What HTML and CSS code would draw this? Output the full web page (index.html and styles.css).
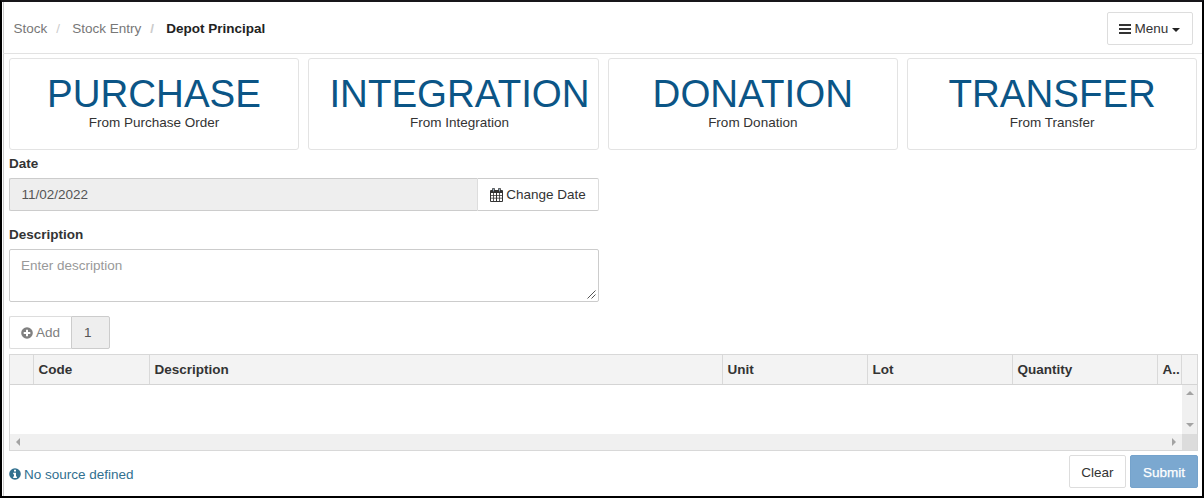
FILE: index.html
```html
<!DOCTYPE html>
<html lang="en">
<head>
<meta charset="utf-8">
<title>Stock Entry</title>
<link rel="stylesheet" href="styles.css">
</head>
<body>
<div class="window">
  <header class="topbar">
    <ol class="breadcrumb">
      <li>Stock</li>
      <li>Stock Entry</li>
      <li class="current">Depot Principal</li>
    </ol>
    <button class="btn menu-btn" type="button">
      <svg class="icon-bars" width="12" height="10" viewBox="0 0 12 10"><path d="M0 0h12v2H0zM0 4h12v2H0zM0 8h12v2H0z" fill="currentColor"/></svg>
      <span>Menu</span>
      <span class="caret"></span>
    </button>
  </header>

  <main class="content">
    <section class="sources">
      <div class="source"><div class="source-body"><div class="source-title">PURCHASE</div><div>From Purchase Order</div></div></div>
      <div class="source"><div class="source-body"><div class="source-title">INTEGRATION</div><div>From Integration</div></div></div>
      <div class="source"><div class="source-body"><div class="source-title">DONATION</div><div>From Donation</div></div></div>
      <div class="source"><div class="source-body"><div class="source-title">TRANSFER</div><div>From Transfer</div></div></div>
    </section>

    <section class="form">
      <div class="label">Date</div>
      <div class="date-group">
        <div class="date-input">11/02/2022</div>
        <button class="btn date-btn" type="button">
          <svg width="13" height="14" viewBox="0 0 13 14"><path d="M1 2h11a1 1 0 0 1 1 1v10a1 1 0 0 1-1 1H1a1 1 0 0 1-1-1V3a1 1 0 0 1 1-1z" fill="#333"/><path d="M1 5h2.2v2H1zM4 5h2v2H4zM7 5h2v2H7zM9.8 5H12v2H9.8zM1 7.8h2.2v2H1zM4 7.8h2v2H4zM7 7.8h2v2H7zM9.8 7.8H12v2H9.8zM1 10.6h2.2V13H1zM4 10.6h2V13H4zM7 10.6h2V13H7zM9.8 10.6H12V13H9.8z" fill="#fff"/><path d="M3.5 1v2M9.5 1v2" stroke="#333" stroke-width="2.6" stroke-linecap="round"/><path d="M3.5 1v2M9.5 1v2" stroke="#9fb8cc" stroke-width=".9" stroke-linecap="round"/></svg>
          <span>Change Date</span>
        </button>
      </div>
      <div class="label label-desc">Description</div>
      <div class="textarea">
        <span>Enter description</span>
        <svg class="resize" width="9" height="9" viewBox="0 0 9 9"><path d="M.5 8.5l8-8M4.5 8.5l4-4" stroke="#555" fill="none"/></svg>
      </div>
    </section>

    <div class="add-group">
      <button class="btn add-btn" type="button">
        <svg width="12" height="12" viewBox="0 0 12 12"><circle cx="6" cy="6" r="5.8" fill="currentColor"/><path d="M6 2.7v6.6M2.7 6h6.6" stroke="#fff" stroke-width="2"/></svg>
        <span>Add</span>
      </button>
      <div class="add-count">1</div>
    </div>

    <div class="grid">
      <div class="grid-head">
        <div></div><div>Code</div><div>Description</div><div>Unit</div><div>Lot</div><div>Quantity</div><div>A..</div><div></div>
      </div>
      <div class="grid-body">
        <div class="rows"></div>
        <div class="vscroll"><i class="arrow up"></i><i class="arrow down"></i></div>
        <div class="hscroll"><i class="arrow left"></i><i class="arrow right"></i></div>
        <div class="corner"></div>
      </div>
    </div>

    <footer class="footer">
      <div class="info">
        <svg width="12" height="12" viewBox="0 0 12 12"><circle cx="6" cy="6" r="5.8" fill="currentColor"/><path d="M5 1.8h2v1.7H5zM4.2 4.7H7v3.8h.9V10H4.2V8.5H5V6.2h-.8z" fill="#fff"/></svg>
        <span>No source defined</span>
      </div>
      <div class="actions">
        <button class="btn clear-btn" type="button">Clear</button>
        <button class="btn submit-btn" type="button">Submit</button>
      </div>
    </footer>
  </main>
</div>
</body>
</html>
```

FILE: styles.css
```css
* { box-sizing: border-box; }

body {
  margin: 0;
  background: #fff;
  color: #333;
  font: 13.5px/19px "Liberation Sans", Arial, sans-serif;
}

.window {
  width: 1204px;
  height: 498px;
  border: 2px solid #000;
  border-top-color: #18171a;
  overflow: hidden;
  display: flex;
  flex-direction: column;
}

.topbar {
  flex: none;
  height: 52px;
  display: flex;
  justify-content: space-between;
  align-items: center;
  padding: 2px 9px 0 9.5px;
  margin-left: 1px;
  border-left: 1px solid #ccc;
  border-bottom: 1px solid #e2e2e2;
}

.breadcrumb {
  display: flex;
  margin: 0;
  padding: 0;
  list-style: none;
  color: #777;
}

.breadcrumb li + li::before {
  content: "/";
  color: #ccc;
  padding: 0 12.2px 0 9px;
}

.breadcrumb .current {
  color: #222;
  font-weight: bold;
}

.btn {
  height: 33px;
  display: flex;
  align-items: center;
  justify-content: center;
  gap: 4px;
  padding: 0;
  font: inherit;
  color: #333;
  background: #fff;
  border: 1px solid #ddd;
  border-radius: 2px;
  white-space: nowrap;
}

.menu-btn {
  width: 86px;
  padding-right: 1px;
}

.caret {
  border: 4px solid transparent;
  border-top-color: #222;
  border-bottom: 0;
  margin-top: 2px;
}

.content {
  flex: 1;
  margin-left: 1px;
  border-left: 1px solid #ccc;
  padding: 4px 4px 0 5px;
}

.sources {
  display: grid;
  grid-template-columns: repeat(4, 290.3px);
  gap: 9.1px;
}

.source {
  min-width: 0;
  height: 92px;
  padding: 15px 18px 0 20px;
  border: 1px solid #e3e3e3;
  border-radius: 3px;
}

.source-body {
  width: max-content;
  min-width: 248px;
  text-align: center;
}

.source-title {
  font-size: 38.5px;
  line-height: 39px;
  color: #0b5586;
}

.form { width: 590px; }

.label {
  height: 28px;
  padding-top: 4px;
  font-weight: bold;
}

.label-desc {
  height: 38px;
  padding-top: 14px;
}

.date-group, .add-group { display: flex; }

.date-input {
  flex: 1;
  height: 33px;
  padding: 6px 11.5px;
  color: #555;
  background: #eee;
  border: 1px solid #ccc;
  border-right: 0;
  border-radius: 2px 0 0 2px;
}

.date-btn {
  width: 122px;
  border-color: #ccc #ddd;
  border-radius: 0 2px 2px 0;
  gap: 3px;
}

.textarea {
  height: 53px;
  display: flex;
  justify-content: space-between;
  padding: 6px 2px 2px 11px;
  color: #999;
  border: 1px solid #ccc;
  border-radius: 2px;
}

.resize { align-self: flex-end; }

.add-group { margin-top: 14px; }

.add-btn {
  width: 62px;
  gap: 3px;
  color: #808080;
  border-right: 0;
  border-radius: 2px 0 0 2px;
}

.add-count {
  width: 39px;
  height: 33px;
  padding: 6px 12px;
  color: #555;
  background: #eee;
  border: 1px solid #ccc;
  border-radius: 0 2px 2px 0;
}

.grid {
  margin-top: 5px;
  height: 97px;
  border: 1px solid #d8d8d8;
}

.grid-head {
  height: 30px;
  display: grid;
  grid-template-columns: 24px 116px 573px 145px 145px 145px 24px 1fr;
  background: #f3f3f3;
  border-bottom: 1px solid #d4d4d4;
  font-weight: bold;
}

.grid-head div {
  padding: 5px 0 0 4.5px;
  border-right: 1px solid #d9d9d9;
  white-space: nowrap;
  overflow: hidden;
}

.grid-head div:last-child { border-right: 0; }

.grid-body {
  height: 65px;
  display: grid;
  grid-template-columns: 1fr 15px;
  grid-template-rows: 1fr 16px;
}

.vscroll, .hscroll {
  display: flex;
  justify-content: space-between;
  align-items: center;
  background: #f0f0f0;
}

.vscroll { flex-direction: column; padding: 6px 0 7px; }
.hscroll { padding: 0 6px; }
.corner { background: #dcdcdc; }

.arrow { border: 4px solid transparent; }
.up { border-top: 0; border-bottom-color: #a3a3a3; }
.down { border-bottom: 0; border-top-color: #a3a3a3; }
.left { border-left: 0; border-right-color: #a3a3a3; }
.right { border-right: 0; border-left-color: #a3a3a3; }

.footer {
  display: flex;
  justify-content: space-between;
  padding-top: 4px;
}

.info {
  display: flex;
  align-items: center;
  gap: 3px;
  height: 38px;
  color: #31708f;
}

.actions { display: flex; gap: 4px; }

.actions .btn { padding-top: 1px; }

.clear-btn { width: 57px; }

.submit-btn {
  width: 68px;
  color: #fff;
  background: #7ba8d0;
  border-color: #75a3cc;
  -webkit-text-stroke: .25px #fff;
}
```
